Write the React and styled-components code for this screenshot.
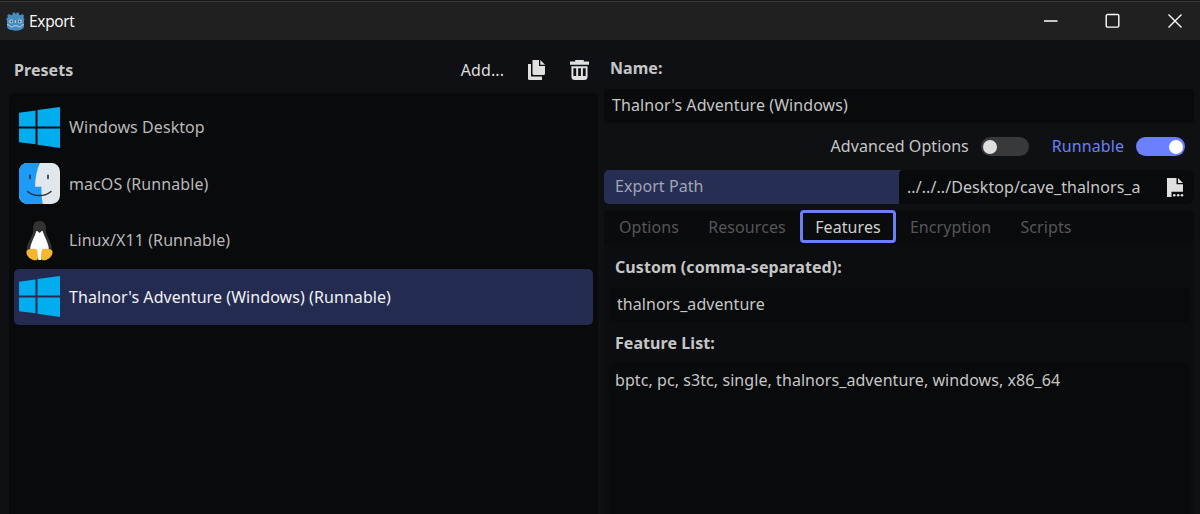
import React from 'react';
import styled, { createGlobalStyle } from 'styled-components';

const GlobalStyle = createGlobalStyle`
  * {
    box-sizing: border-box;
  }
  body {
    margin: 0;
    background: #0f1014;
    overflow: hidden;
  }
`;

const Window = styled.div`
  width: 1200px;
  height: 514px;
  overflow: hidden;
  display: flex;
  flex-direction: column;
  background: #0f1014;
  color: #c6c6c6;
  font-family: "Noto Sans", "Open Sans", sans-serif;
  font-size: 16px;
  line-height: 22px;
  letter-spacing: 0.07px;
  white-space: nowrap;
`;

const TitleBar = styled.header`
  height: 40px;
  flex-shrink: 0;
  display: flex;
  align-items: center;
  padding: 1px 17px 0 6px;
  background: #212020;
  border-top: 1px solid #17171b;
  box-shadow: inset 0 1px 0 #39393b;
  color: #fff;
`;

const Title = styled.span`
  margin-left: 4px;
  font-family: "Open Sans", "Noto Sans", sans-serif;
  font-size: 15.5px;
  letter-spacing: -0.3px;
`;

const WindowButtons = styled.div`
  margin-left: auto;
  display: flex;
  gap: 46px;
`;

const Body = styled.main`
  flex: 1;
  min-height: 0;
  display: flex;
  gap: 6px;
  padding: 0 6px 0 9px;
`;

const PresetColumn = styled.section`
  width: 589px;
  display: flex;
  flex-direction: column;
`;

const PresetHeader = styled.div`
  height: 53px;
  flex-shrink: 0;
  display: flex;
  align-items: center;
  padding: 7px 9px 0 5px;
`;

const Heading = styled.span`
  font-weight: 700;
  letter-spacing: 0.06px;
`;

const AddButton = styled.span`
  margin-left: auto;
  margin-right: 24px;
  color: #dedede;
`;

const ToolIcon = styled.svg`
  display: block;
  flex-shrink: 0;
  margin-right: ${props => props.$gap || 0}px;
`;

const PresetList = styled.div`
  flex: 1;
  padding: 6px 5px;
  border-radius: 5px 5px 0 0;
  background: #090a0c;
`;

const Preset = styled.div`
  height: 56.5px;
  display: flex;
  align-items: center;
  gap: 9px;
  padding: 0 6px 0 5px;
  border-radius: 5px;
  background: ${props => props.$selected ? "#242b51" : "transparent"};
  color: ${props => props.$selected ? "#f2f2f4" : "#b9b9b9"};
`;

const Settings = styled.section`
  width: 590px;
  display: flex;
  flex-direction: column;
`;

const NameLabel = styled.div`
  height: 49px;
  flex-shrink: 0;
  padding: 17px 6px 0;
`;

const Field = styled.div`
  height: 34px;
  flex-shrink: 0;
  display: flex;
  align-items: center;
  padding: 0 8px 2px;
  border-radius: 4px;
  background: #090a0c;
`;

const Toggles = styled.div`
  height: 47px;
  flex-shrink: 0;
  display: flex;
  align-items: center;
  justify-content: flex-end;
  padding-right: 9px;
`;

const ToggleLabel = styled.span`
  margin-right: 12px;
  padding-bottom: 2px;
  color: ${props => props.$on ? "#6b80f5" : "#c6c6c6"};
`;

const Switch = styled.span`
  width: ${props => props.$on ? 49 : 48}px;
  height: 19px;
  display: flex;
  align-items: center;
  justify-content: ${props => props.$on ? "flex-end" : "flex-start"};
  padding: 0 2.5px;
  margin-right: ${props => props.$on ? 0 : 23}px;
  border-radius: 10px;
  background: ${props => props.$on ? "#6b80fe" : "#38393b"};
`;

const Knob = styled.i`
  width: 14px;
  height: 14px;
  border-radius: 50%;
  background: ${props => props.$on ? "#fff" : "#dedede"};
`;

const PathRow = styled.div`
  height: 34px;
  flex-shrink: 0;
  display: flex;
  border-radius: 5px;
  overflow: hidden;
  background: #262e54;
`;

const PathLabel = styled.div`
  width: 295px;
  padding: 5px 11px;
  color: #a1a5b2;
`;

const PathValue = styled.div`
  flex: 1;
  display: flex;
  align-items: center;
  padding: 0 10px 0 8px;
  border-radius: 4px 0 0 0;
  background: #090a0c;
  color: #c6c6c6;
`;

const PathText = styled.span`
  flex: 1;
`;

const Tabs = styled.nav`
  height: 34px;
  flex-shrink: 0;
  margin-top: 6px;
  display: flex;
  border-radius: 5px 5px 0 0;
  background: #0a0b0d;
`;

const Tab = styled.span`
  width: ${props => props.$width}px;
  height: 33px;
  display: flex;
  align-items: center;
  justify-content: center;
  border: 3px solid ${props => props.$active ? "#6b80f5" : "transparent"};
  border-radius: 4px;
  color: ${props => props.$active ? "#d0d0d0" : "#55565a"};
`;

const TabPanel = styled.div`
  flex: 1;
  display: flex;
  flex-direction: column;
  padding: 0 5px;
  background: #0c0d10;
`;

const PanelLabel = styled.div`
  height: ${props => props.$height}px;
  flex-shrink: 0;
  padding: ${props => props.$top}px 6px 0;
`;

const FeatureList = styled.div`
  flex: 1;
  padding: 6px;
  border-radius: 4px 4px 0 0;
  background: #090a0c;
`;

const WindowsLogo = () => (
  <ToolIcon width="41" height="41" viewBox="0 0 41 42" preserveAspectRatio="none" fill="#00adef">
    <path d="M0 6 16.5 3.5V20H0zM18.5 3.2 41 0v20H18.5zM0 22h16.5v16.2L0 36zM18.5 22H41v20l-22.5-3.3z" />
  </ToolIcon>
);

const MacLogo = () => (
  <ToolIcon width="41" height="41" viewBox="0 0 41 41">
    <rect width="41" height="41" rx="8.5" fill="#e1e8ed" />
    <path d="M21 0H8.5A8.5 8.5 0 0 0 0 8.5v24A8.5 8.5 0 0 0 8.5 41h15.3c-1-4.6-1.5-10.5-1.4-17.2H16C16.3 14 18 6 21 0z" fill="#1d9bf6" />
    <path d="M11 12.3v3.2M29 12.3v3.2" stroke="#17303d" strokeWidth="1.6" strokeLinecap="round" />
    <path d="M8.5 28.5c6.5 5.4 17.5 5.4 23.5 0" fill="none" stroke="#17303d" strokeWidth="1.4" strokeLinecap="round" />
  </ToolIcon>
);

const LinuxLogo = () => (
  <ToolIcon width="41" height="41" viewBox="0 0 41 42">
    <path d="M20.5 1C16 1 13.7 4 14 8.5c.2 5.5-1.4 7.6-3.5 12C8 25.6 6.5 30 8 35h24.5c1.5-5 .4-9.5-2-14.5-2-4.2-3.7-6.5-3.5-12C27.2 4 25 1 20.5 1z" fill="#333" />
    <path d="M17.2 11.5c1.5-1 2.2 1.6 3.3 1.6s1.8-2.6 3.3-1.6c1.6 5.5 5 10.5 6 16 .7 4-1.3 8.5-4.8 11.5h-9c-3.5-3-5.5-7.5-4.8-11.5 1-5.5 4.5-10.5 6-16z" fill="#fff" />
    <path d="M9 30.2c3-1 7-.7 9 0 .9 3 1 6.5.8 9.8-.6 1.5-3 1.7-5.5.7C9.5 39.3 6 35 7.5 31.5zM32 30.2c-3-1-7-.7-9 0-.9 3-1.3 6.5-1 9.8.7 1.5 3.3 1.7 5.7.7 3.8-1.4 7.3-5.7 5.8-9.2z" fill="#f4b72f" />
    <path d="M18.7 31.5h3.5L22 41h-2.8z" fill="#fff" />
  </ToolIcon>
);

const GodotLogo = () => (
  <ToolIcon width="19" height="19" viewBox="0 0 19 19">
    <path d="M1.2 3.5 3.2 2l2 1.3 1.3-.6V1l2-.8.9 1.6h.8L11 .2l2 .8v1.7l1.2.6L16 2l2.2 1.6-.9 2.1 1.2.9-.6 2.7.1 5c0 3-4 4.4-8.5 4.4S1 17.300 1 14.300v-5L.2 6.600l1.700-1z" fill="#478cbf" />
    <circle cx="5.2" cy="9.4" r="1.9" fill="#c9dcea" />
    <circle cx="13.8" cy="9.4" r="1.9" fill="#c9dcea" />
    <circle cx="5.4" cy="9.5" r="1.1" fill="#33424c" />
    <circle cx="13.6" cy="9.5" r="1.1" fill="#33424c" />
    <path d="M9.5 8.5v2" stroke="#d6e5ef" strokeWidth="1" />
    <path d="m1.2 12.5 2.2.8 1.2 1.5 2 .2.9-1.2h4l.9 1.2 2-.2 1.2-1.5 2.2-.8" fill="none" stroke="#c9dcea" strokeWidth=".9" />
  </ToolIcon>
);

const CopyIcon = () => (
  <ToolIcon width="17" height="20" viewBox="0 0 17 20" fill="#e0e0e0" $gap={25}>
    <path d="M0 4h3v12.5h11V20H1.5Q0 20 0 18.5zM4.5 0H11v6h6v7.5Q17 15 15.5 15H6Q4.5 15 4.5 13.5zM12.3 0 17 4.7h-4.7z" />
  </ToolIcon>
);

const TrashIcon = () => (
  <ToolIcon width="19" height="20" viewBox="0 0 20 20" preserveAspectRatio="none">
    <path fillRule="evenodd" fill="#e0e0e0" d="M5.5 0h9v1.5H20v3.3H0V1.5h5.5zM1.5 6.2h17v10.3Q18.5 20 15 20H5q-3.5 0-3.5-3.5zM3.6 8.3V16h2.9V8.3zm5 0V16h2.9V8.3zm5 0V16h2.9V8.3z" />
  </ToolIcon>
);

const FileIcon = () => (
  <ToolIcon width="17" height="19" viewBox="0 0 17 19" fill="#e0e0e0">
    <path d="M0 0h9.5v6.2H16v7.6H4.5V19H0zM11 0l5 5h-5z" />
    <circle cx="7.3" cy="17.2" r="1.3" />
    <circle cx="11.2" cy="17.2" r="1.3" />
    <circle cx="15" cy="17.2" r="1.3" />
  </ToolIcon>
);

const presets = [
  { name: "Windows Desktop", icon: <WindowsLogo /> },
  { name: "macOS (Runnable)", icon: <MacLogo /> },
  { name: "Linux/X11 (Runnable)", icon: <LinuxLogo /> },
  { name: "Thalnor's Adventure (Windows) (Runnable)", icon: <WindowsLogo />, selected: true },
];

const tabs = [
  { name: "Options", width: 90 },
  { name: "Resources", width: 106 },
  { name: "Features", width: 96, active: true },
  { name: "Encryption", width: 109 },
  { name: "Scripts", width: 82 },
];

export default () => {
  return (
    <>
      <GlobalStyle />
      <Window>
        <TitleBar>
          <GodotLogo />
          <Title>Export</Title>
          <WindowButtons>
            <ToolIcon width="16" height="16" viewBox="0 0 16 16">
              <path d="M1 8h13.5" stroke="#fff" strokeWidth="1.5" />
            </ToolIcon>
            <ToolIcon width="16" height="16" viewBox="0 0 16 16">
              <rect x="1.2" y="1.5" width="12.6" height="12.6" rx="1.3" fill="none" stroke="#fff" strokeWidth="1.4" />
            </ToolIcon>
            <ToolIcon width="16" height="16" viewBox="0 0 16 16">
              <path d="m1.5 1.5 13 13m0-13-13 13" stroke="#fff" strokeWidth="1.4" />
            </ToolIcon>
          </WindowButtons>
        </TitleBar>
        <Body>
          <PresetColumn>
            <PresetHeader>
              <Heading>Presets</Heading>
              <AddButton>Add...</AddButton>
              <CopyIcon />
              <TrashIcon />
            </PresetHeader>
            <PresetList>
              {presets.map(preset => (
                <Preset key={preset.name} $selected={preset.selected}>
                  {preset.icon}
                  <span>{preset.name}</span>
                </Preset>
              ))}
            </PresetList>
          </PresetColumn>
          <Settings>
            <NameLabel><Heading>Name:</Heading></NameLabel>
            <Field>Thalnor's Adventure (Windows)</Field>
            <Toggles>
              <ToggleLabel>Advanced Options</ToggleLabel>
              <Switch><Knob /></Switch>
              <ToggleLabel $on>Runnable</ToggleLabel>
              <Switch $on><Knob $on /></Switch>
            </Toggles>
            <PathRow>
              <PathLabel>Export Path</PathLabel>
              <PathValue>
                <PathText>../../../Desktop/cave_thalnors_a</PathText>
                <FileIcon />
              </PathValue>
            </PathRow>
            <Tabs>
              {tabs.map(tab => (
                <Tab key={tab.name} $width={tab.width} $active={tab.active}>{tab.name}</Tab>
              ))}
            </Tabs>
            <TabPanel>
              <PanelLabel $height={44} $top={12}><Heading>Custom (comma-separated):</Heading></PanelLabel>
              <Field>thalnors_adventure</Field>
              <PanelLabel $height={41} $top={10}><Heading>Feature List:</Heading></PanelLabel>
              <FeatureList>bptc, pc, s3tc, single, thalnors_adventure, windows, x86_64</FeatureList>
            </TabPanel>
          </Settings>
        </Body>
      </Window>
    </>
  );
};
